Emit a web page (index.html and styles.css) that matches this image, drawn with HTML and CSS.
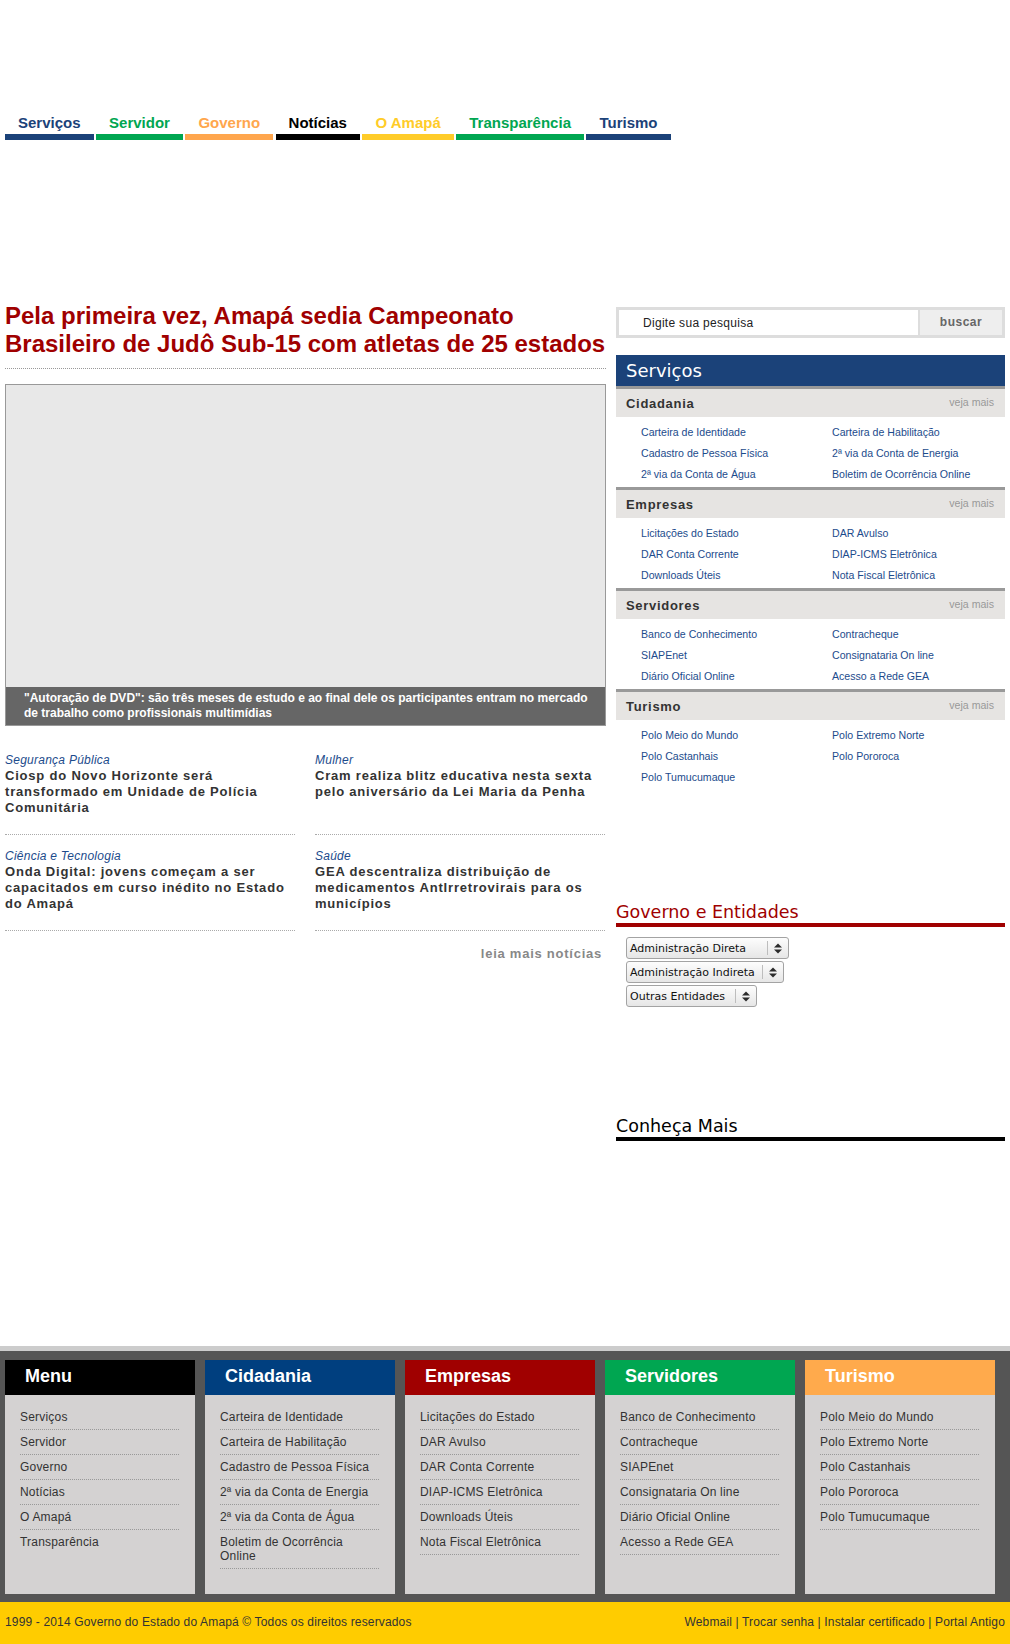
FILE: index.html
```html
<!DOCTYPE html>
<html lang="pt-BR">
<head>
<meta charset="utf-8">
<title>Governo do Estado do Amapá</title>
<link rel="stylesheet" href="styles.css">
</head>
<body>
<div class="page">
  <nav class="topnav">
    <a class="nav-item nav-blue" href="#">Serviços</a>
    <a class="nav-item nav-green" href="#">Servidor</a>
    <a class="nav-item nav-orange" href="#">Governo</a>
    <a class="nav-item nav-black" href="#">Notícias</a>
    <a class="nav-item nav-yellow" href="#">O Amapá</a>
    <a class="nav-item nav-green" href="#">Transparência</a>
    <a class="nav-item nav-blue" href="#">Turismo</a>
  </nav>

  <div class="main">
    <div class="content">
      <h1 class="headline">Pela primeira vez, Amapá sedia Campeonato Brasileiro de Judô Sub-15 com atletas de 25 estados</h1>
      <figure class="feature">
        <figcaption class="feature-caption">"Autoração de DVD": são três meses de estudo e ao final dele os participantes entram no mercado de trabalho como profissionais multimídias</figcaption>
      </figure>

      <div class="news-grid">
        <article class="news">
          <span class="news-cat">Segurança Pública</span>
          <h2 class="news-title">Ciosp do Novo Horizonte será transformado em Unidade de Polícia Comunitária</h2>
        </article>
        <article class="news">
          <span class="news-cat">Mulher</span>
          <h2 class="news-title">Cram realiza blitz educativa nesta sexta pelo aniversário da Lei Maria da Penha</h2>
        </article>
        <article class="news">
          <span class="news-cat">Ciência e Tecnologia</span>
          <h2 class="news-title">Onda Digital: jovens começam a ser capacitados em curso inédito no Estado do Amapá</h2>
        </article>
        <article class="news">
          <span class="news-cat">Saúde</span>
          <h2 class="news-title">GEA descentraliza distribuição de medicamentos AntIrretrovirais para os municípios</h2>
        </article>
      </div>
      <a class="more-news" href="#">leia mais notícias</a>
    </div>

    <aside class="sidebar">
      <form class="search">
        <input class="search-input" type="text" value="Digite sua pesquisa">
        <button class="search-btn" type="button">buscar</button>
      </form>

      <h2 class="svc-title">Serviços</h2>

      <section class="svc">
        <div class="svc-head"><h3 class="svc-name">Cidadania</h3><a class="svc-more" href="#">veja mais</a></div>
        <ul class="svc-links">
          <li><a href="#">Carteira de Identidade</a></li>
          <li><a href="#">Carteira de Habilitação</a></li>
          <li><a href="#">Cadastro de Pessoa Física</a></li>
          <li><a href="#">2ª via da Conta de Energia</a></li>
          <li><a href="#">2ª via da Conta de Água</a></li>
          <li><a href="#">Boletim de Ocorrência Online</a></li>
        </ul>
      </section>

      <section class="svc">
        <div class="svc-head"><h3 class="svc-name">Empresas</h3><a class="svc-more" href="#">veja mais</a></div>
        <ul class="svc-links">
          <li><a href="#">Licitações do Estado</a></li>
          <li><a href="#">DAR Avulso</a></li>
          <li><a href="#">DAR Conta Corrente</a></li>
          <li><a href="#">DIAP-ICMS Eletrônica</a></li>
          <li><a href="#">Downloads Úteis</a></li>
          <li><a href="#">Nota Fiscal Eletrônica</a></li>
        </ul>
      </section>

      <section class="svc">
        <div class="svc-head"><h3 class="svc-name">Servidores</h3><a class="svc-more" href="#">veja mais</a></div>
        <ul class="svc-links">
          <li><a href="#">Banco de Conhecimento</a></li>
          <li><a href="#">Contracheque</a></li>
          <li><a href="#">SIAPEnet</a></li>
          <li><a href="#">Consignataria On line</a></li>
          <li><a href="#">Diário Oficial Online</a></li>
          <li><a href="#">Acesso a Rede GEA</a></li>
        </ul>
      </section>

      <section class="svc">
        <div class="svc-head"><h3 class="svc-name">Turismo</h3><a class="svc-more" href="#">veja mais</a></div>
        <ul class="svc-links">
          <li><a href="#">Polo Meio do Mundo</a></li>
          <li><a href="#">Polo Extremo Norte</a></li>
          <li><a href="#">Polo Castanhais</a></li>
          <li><a href="#">Polo Pororoca</a></li>
          <li><a href="#">Polo Tumucumaque</a></li>
        </ul>
      </section>

      <h2 class="gov-title">Governo e Entidades</h2>
      <div class="selects">
        <div class="dd dd-direta"><span class="dd-text">Administração Direta</span><span class="dd-sep"></span><svg class="dd-arrow" width="8" height="11" viewBox="0 0 8 11"><polygon points="0,4.5 4,0.5 8,4.5" fill="#2b2b2b"/><polygon points="0,6.5 4,10.5 8,6.5" fill="#2b2b2b"/></svg></div>
        <div class="dd dd-indireta"><span class="dd-text">Administração Indireta</span><span class="dd-sep"></span><svg class="dd-arrow" width="8" height="11" viewBox="0 0 8 11"><polygon points="0,4.5 4,0.5 8,4.5" fill="#2b2b2b"/><polygon points="0,6.5 4,10.5 8,6.5" fill="#2b2b2b"/></svg></div>
        <div class="dd dd-outras"><span class="dd-text">Outras Entidades</span><span class="dd-sep"></span><svg class="dd-arrow" width="8" height="11" viewBox="0 0 8 11"><polygon points="0,4.5 4,0.5 8,4.5" fill="#2b2b2b"/><polygon points="0,6.5 4,10.5 8,6.5" fill="#2b2b2b"/></svg></div>
      </div>

      <h2 class="know-title">Conheça Mais</h2>
      <div class="know-body"></div>
    </aside>
  </div>
</div>

<footer class="site-footer">
  <div class="footer-cols">
    <section class="fcol fcol-menu">
      <h3 class="fcol-title t-black">Menu</h3>
      <ul class="fcol-list">
        <li><a href="#">Serviços</a></li>
        <li><a href="#">Servidor</a></li>
        <li><a href="#">Governo</a></li>
        <li><a href="#">Notícias</a></li>
        <li><a href="#">O Amapá</a></li>
        <li><a href="#">Transparência</a></li>
      </ul>
    </section>
    <section class="fcol">
      <h3 class="fcol-title t-blue">Cidadania</h3>
      <ul class="fcol-list">
        <li><a href="#">Carteira de Identidade</a></li>
        <li><a href="#">Carteira de Habilitação</a></li>
        <li><a href="#">Cadastro de Pessoa Física</a></li>
        <li><a href="#">2ª via da Conta de Energia</a></li>
        <li><a href="#">2ª via da Conta de Água</a></li>
        <li><a href="#">Boletim de Ocorrência Online</a></li>
      </ul>
    </section>
    <section class="fcol">
      <h3 class="fcol-title t-red">Empresas</h3>
      <ul class="fcol-list">
        <li><a href="#">Licitações do Estado</a></li>
        <li><a href="#">DAR Avulso</a></li>
        <li><a href="#">DAR Conta Corrente</a></li>
        <li><a href="#">DIAP-ICMS Eletrônica</a></li>
        <li><a href="#">Downloads Úteis</a></li>
        <li><a href="#">Nota Fiscal Eletrônica</a></li>
      </ul>
    </section>
    <section class="fcol">
      <h3 class="fcol-title t-green">Servidores</h3>
      <ul class="fcol-list">
        <li><a href="#">Banco de Conhecimento</a></li>
        <li><a href="#">Contracheque</a></li>
        <li><a href="#">SIAPEnet</a></li>
        <li><a href="#">Consignataria On line</a></li>
        <li><a href="#">Diário Oficial Online</a></li>
        <li><a href="#">Acesso a Rede GEA</a></li>
      </ul>
    </section>
    <section class="fcol">
      <h3 class="fcol-title t-orange">Turismo</h3>
      <ul class="fcol-list">
        <li><a href="#">Polo Meio do Mundo</a></li>
        <li><a href="#">Polo Extremo Norte</a></li>
        <li><a href="#">Polo Castanhais</a></li>
        <li><a href="#">Polo Pororoca</a></li>
        <li><a href="#">Polo Tumucumaque</a></li>
      </ul>
    </section>
  </div>
  <div class="footer-bar">
    <span>1999 - 2014 Governo do Estado do Amapá © Todos os direitos reservados</span>
    <span><a href="#">Webmail</a> | <a href="#">Trocar senha</a> | <a href="#">Instalar certificado</a> | <a href="#">Portal Antigo</a></span>
  </div>
</footer>
</body>
</html>
```

FILE: styles.css
```css
* { box-sizing: border-box; }

body {
  margin: 0;
  background: #fff;
  color: #333;
  font-family: "Liberation Sans", Arial, sans-serif;
}

a { color: inherit; text-decoration: none; }
ul { list-style: none; margin: 0; padding: 0; }
h1, h2, h3, p, figure { margin: 0; font-weight: normal; }

.page {
  width: 1000px;
  margin-left: 5px;
}

/* top navigation */
.topnav {
  display: flex;
  gap: 2.5px;
  margin-top: 113px;
}
.nav-item {
  font-size: 15px;
  font-weight: bold;
  line-height: 18px;
  padding: 1px 13px 2px;
  border-bottom: 6px solid currentColor;
}
.nav-blue { color: #1b4279; }
.nav-green { color: #00a651; }
.nav-orange { color: #ffa64d; }
.nav-black { color: #000; }
.nav-yellow { color: #ffcc29; }

/* main area */
.main {
  display: flex;
  align-items: flex-start;
  gap: 10px;
  margin-top: 162px;
}
.content { width: 601px; }
.sidebar { width: 389px; }

.headline {
  font-size: 24px;
  font-weight: bold;
  line-height: 28px;
  color: #a00000;
  padding-bottom: 10px;
  border-bottom: 1px dotted #999;
}

.feature {
  margin-top: 15px;
  height: 342px;
  border: 1px solid #999;
  background: #e8e8e8;
  display: flex;
  flex-direction: column;
  justify-content: flex-end;
}
.feature-caption {
  background: #666;
  color: #fff;
  font-size: 12px;
  font-weight: bold;
  line-height: 14.5px;
  padding: 4px 10px 5px 18px;
}

.news-grid {
  display: grid;
  grid-template-columns: 290px 290px;
  column-gap: 20px;
  row-gap: 13px;
  margin-top: 26px;
}
.news {
  padding-bottom: 18px;
  border-bottom: 1px dotted #aaa;
}
.news-cat {
  display: block;
  font-size: 12px;
  font-style: italic;
  letter-spacing: 0.25px;
  line-height: 16px;
  color: #1c4b8c;
}
.news-title {
  font-size: 13px;
  font-weight: bold;
  letter-spacing: 0.8px;
  line-height: 16px;
  color: #333;
}
.more-news {
  display: block;
  margin-top: 15px;
  padding-right: 4px;
  text-align: right;
  font-size: 13px;
  font-weight: bold;
  letter-spacing: 0.75px;
  line-height: 16px;
  color: #888;
}

/* sidebar */
.search {
  display: flex;
  gap: 2px;
  height: 31px;
  margin: 5px 0 0;
  padding: 3px;
  background: #ddd;
}
.search-input {
  flex: 1;
  min-width: 0;
  border: 0;
  outline: none;
  background: #fff;
  padding: 0 0 0 24px;
  font-family: "Liberation Sans", Arial, sans-serif;
  font-size: 12px;
  letter-spacing: 0.3px;
  color: #222;
}
.search-btn {
  width: 82px;
  border: 0;
  background: #eee;
  padding: 0 0 2px;
  font-family: "Liberation Sans", Arial, sans-serif;
  font-size: 12px;
  font-weight: bold;
  letter-spacing: 0.5px;
  color: #666;
}

.svc-title {
  margin-top: 17px;
  height: 31px;
  padding-left: 10px;
  background: #1b4279;
  color: #fff;
  font-family: "DejaVu Sans", Verdana, sans-serif;
  font-size: 18px;
  line-height: 31px;
}
.svc { border-top: 3px solid #999; }
.svc-head {
  display: flex;
  justify-content: space-between;
  align-items: center;
  height: 28px;
  padding: 0 11px 0 10px;
  background: #e6e4e2;
}
.svc-name {
  font-size: 13px;
  font-weight: bold;
  letter-spacing: 0.7px;
  color: #333;
}
.svc-more {
  font-size: 10.6px;
  color: #999;
  margin-top: -2px;
}
.svc-links {
  display: grid;
  grid-template-columns: 191px 1fr;
  grid-auto-rows: 21px;
  height: 70px;
  padding: 5px 0 2px 25px;
}
.svc-links a {
  font-size: 10.6px;
  line-height: 21px;
  color: #1c4b8c;
}

.gov-title {
  margin-top: 111px;
  font-family: "DejaVu Sans", Verdana, sans-serif;
  font-size: 17.5px;
  line-height: 22px;
  color: #a00000;
  border-bottom: 4px solid #a00000;
}
.selects {
  display: flex;
  flex-direction: column;
  align-items: flex-start;
  gap: 2px;
  margin-top: 10px;
  padding-left: 10px;
}
.dd {
  display: flex;
  align-items: center;
  height: 22px;
  border: 1px solid #a3a3a3;
  border-radius: 3px;
  background: linear-gradient(#fdfdfd, #e6e6e6);
  font-family: "DejaVu Sans", Verdana, sans-serif;
  font-size: 11px;
  color: #111;
}
.dd-direta { width: 163px; }
.dd-indireta { width: 158px; }
.dd-outras { width: 131px; }
.dd-text { flex: 1; padding-left: 3px; white-space: nowrap; }
.dd-sep {
  width: 1px;
  height: 14px;
  background: #bdbdbd;
}
.dd-arrow { margin: 0 6px 0 6px; }

.know-title {
  margin-top: 108px;
  font-family: "DejaVu Sans", Verdana, sans-serif;
  font-size: 17.5px;
  line-height: 22px;
  color: #000;
  border-bottom: 4px solid #000;
}
.know-body { height: 205px; }

/* footer */
.site-footer {
  border-top: 5px solid #ccc;
  background: #555;
}
.footer-cols {
  display: flex;
  gap: 10px;
  padding: 9px 5px 8px;
}
.fcol {
  width: 190px;
  height: 234px;
  background: #d4d2d2;
}
.fcol-title {
  height: 35px;
  padding-left: 20px;
  color: #fff;
  font-size: 18px;
  font-weight: bold;
  line-height: 33px;
}
.t-black { background: #000; }
.t-blue { background: #003f7f; }
.t-red { background: #a00000; }
.t-green { background: #00a651; }
.t-orange { background: #ffaa4c; }
.fcol-list { padding: 10px 16px 0 15px; }
.fcol-list li {
  padding: 5px 0;
  border-bottom: 1px dotted #999;
  font-size: 12px;
  letter-spacing: 0.2px;
  line-height: 14px;
  color: #333;
}
.fcol-menu .fcol-list li:last-child { border-bottom: 0; }

.footer-bar {
  display: flex;
  justify-content: space-between;
  height: 42px;
  padding: 12px 5px 0;
  background: #ffcc00;
  font-size: 12px;
  letter-spacing: 0.15px;
  line-height: 16px;
  color: #333;
}
```
